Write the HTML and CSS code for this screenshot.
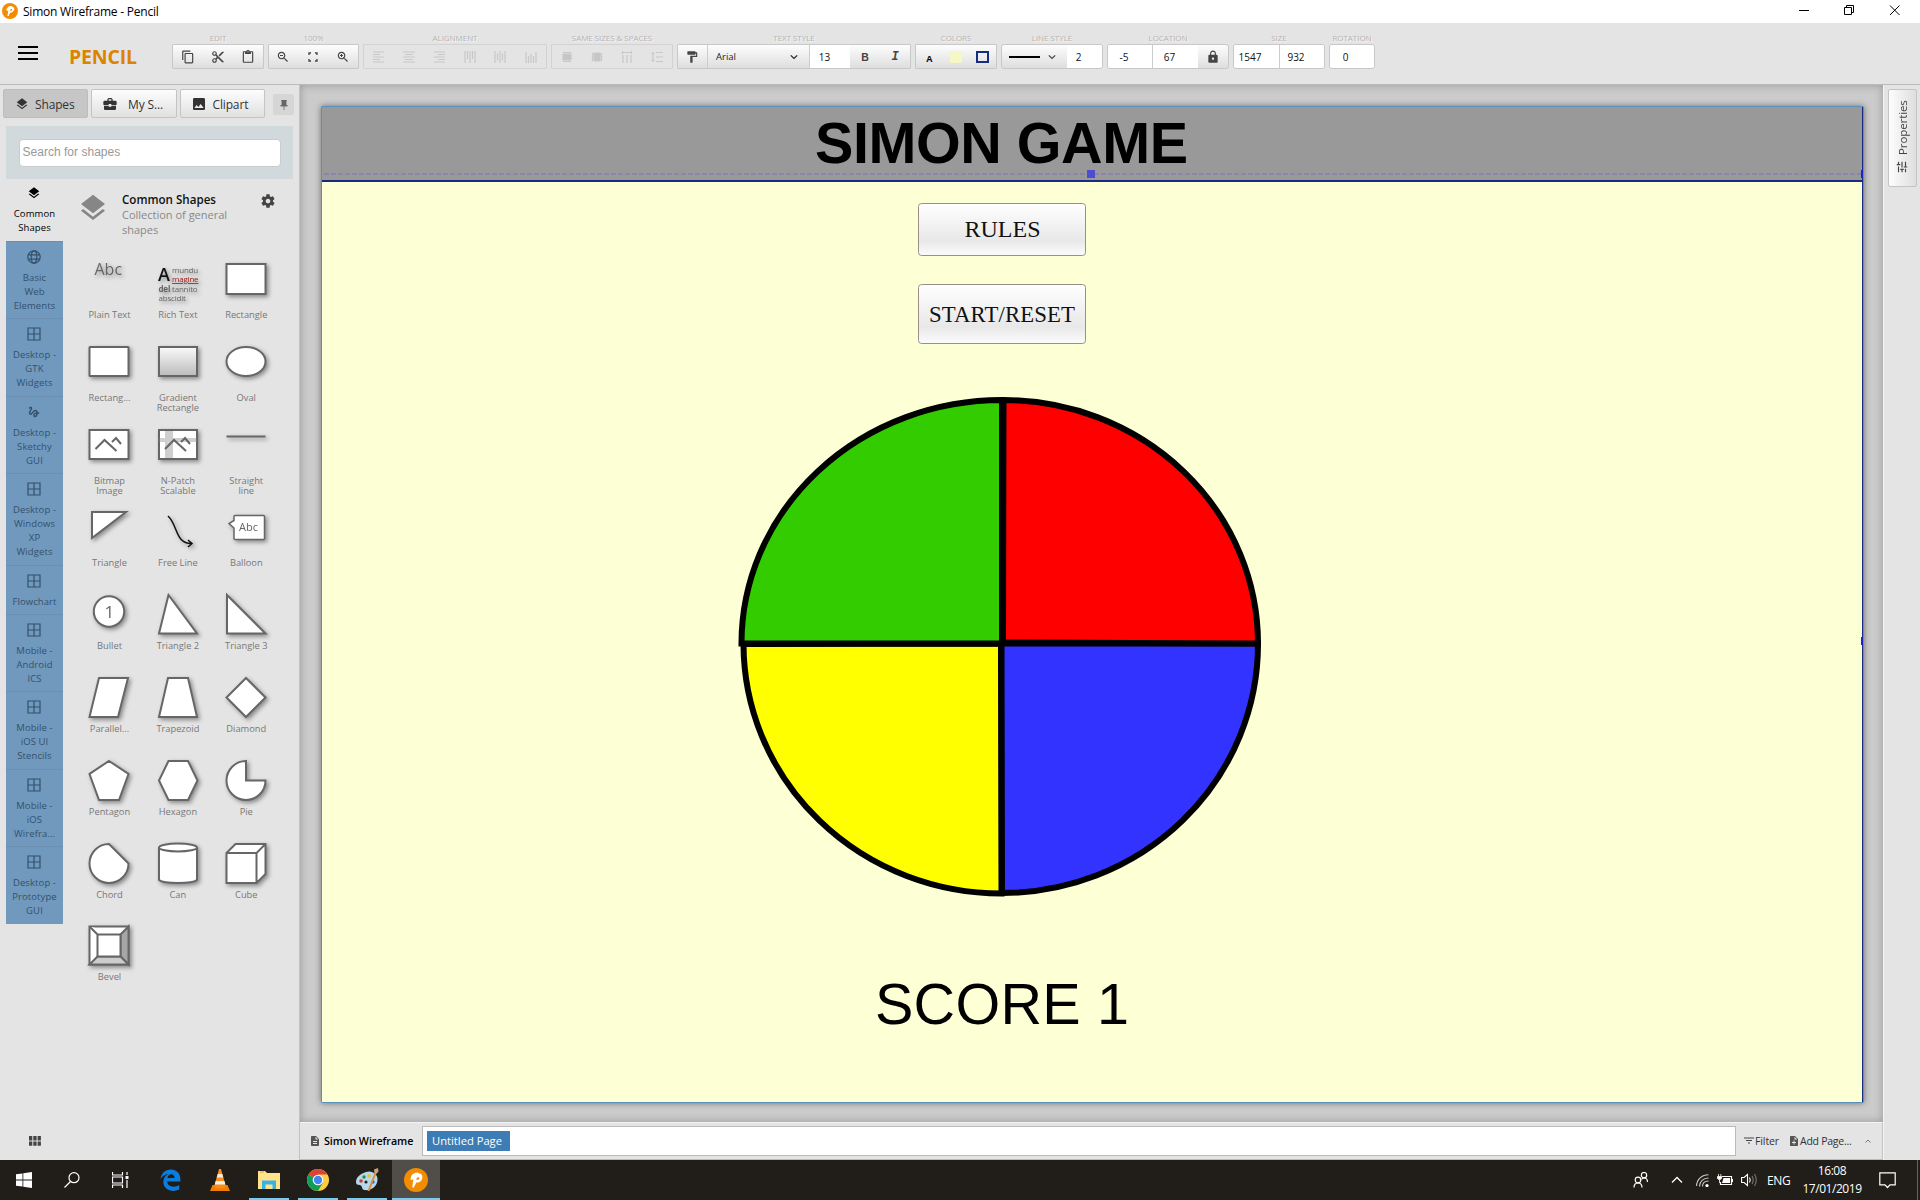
FILE: index.html
```html
<!DOCTYPE html>
<html lang="en">
<head>
<meta charset="utf-8">
<title>Simon Wireframe - Pencil</title>
<link rel="stylesheet" href="styles.css">
</head>
<body>
<svg class="defs" width="0" height="0">
  <defs>
    <symbol id="layers" viewBox="0 0 24 24"><path d="M11.99 18.54l-7.37-5.73L3 14.07l9 7 9-7-1.63-1.27-7.38 5.74zM12 16l7.36-5.73L21 9l-9-7-9 7 1.63 1.27L12 16z"/></symbol>
    <symbol id="copy" viewBox="0 0 24 24"><path d="M16 1H4c-1.1 0-2 .9-2 2v14h2V3h12V1zm3 4H8c-1.1 0-2 .9-2 2v14c0 1.1.9 2 2 2h11c1.1 0 2-.9 2-2V7c0-1.1-.9-2-2-2zm0 16H8V7h11v14z"/></symbol>
    <symbol id="cut" viewBox="0 0 24 24"><path d="M9.64 7.64c.23-.5.36-1.05.36-1.64 0-2.21-1.79-4-4-4S2 3.79 2 6s1.79 4 4 4c.59 0 1.14-.13 1.64-.36L10 12l-2.36 2.36C7.14 14.13 6.59 14 6 14c-2.21 0-4 1.79-4 4s1.79 4 4 4 4-1.79 4-4c0-.59-.13-1.14-.36-1.64L12 14l7 7h3v-1L9.64 7.64zM6 8c-1.1 0-2-.89-2-2s.9-2 2-2 2 .89 2 2-.9 2-2 2zm0 12c-1.1 0-2-.89-2-2s.9-2 2-2 2 .89 2 2-.9 2-2 2zm6-7.500c-.28 0-.5-.22-.5-.5s.22-.5.5-.5.5.22.5.5-.22.5-.5.5zM19 3l-6 6 2 2 7-7V3z"/></symbol>
    <symbol id="paste" viewBox="0 0 24 24"><path d="M19 2h-4.180C14.400.84 13.300 0 12 0c-1.300 0-2.400.84-2.820 2H5c-1.100 0-2 .9-2 2v16c0 1.100.9 2 2 2h14c1.100 0 2-.9 2-2V4c0-1.100-.9-2-2-2zm-7 0c.55 0 1 .45 1 1s-.45 1-1 1-1-.45-1-1 .45-1 1-1zm7 18H5V4h2v3h10V4h2v16z"/></symbol>
    <symbol id="lens" viewBox="0 0 24 24"><path d="M15.500 14h-.79l-.28-.27C15.410 12.590 16 11.110 16 9.500 16 5.910 13.090 3 9.500 3S3 5.910 3 9.500 5.910 16 9.500 16c1.610 0 3.090-.59 4.230-1.570l.27.28v.79l5 4.990L20.490 19l-4.990-5zm-6 0C7.010 14 5 11.990 5 9.500S7.010 5 9.500 5 14 7.010 14 9.500 11.990 14 9.500 14z"/></symbol>
    <symbol id="gear" viewBox="0 0 24 24"><path d="M19.430 12.980c.04-.32.07-.64.07-.98s-.03-.66-.07-.98l2.110-1.650c.19-.15.24-.42.12-.64l-2-3.460c-.12-.22-.39-.3-.61-.22l-2.490 1c-.52-.4-1.080-.73-1.690-.98l-.38-2.650C14.460 2.180 14.250 2 14 2h-4c-.25 0-.46.18-.49.42l-.38 2.650c-.61.25-1.170.59-1.690.98l-2.490-1c-.23-.09-.49 0-.61.22l-2 3.460c-.13.22-.07.49.12.64l2.110 1.650c-.04.32-.07.65-.07.98s.03.66.07.98l-2.110 1.650c-.19.15-.24.42-.12.64l2 3.460c.12.22.39.3.61.22l2.490-1c.52.4 1.080.73 1.690.98l.38 2.650c.03.24.24.42.49.42h4c.25 0 .46-.18.49-.42l.38-2.650c.61-.25 1.170-.59 1.690-.98l2.490 1c.23.09.49 0 .61-.22l2-3.460c.12-.22.07-.49-.12-.64l-2.110-1.650zM12 15.500c-1.930 0-3.500-1.570-3.500-3.500s1.570-3.500 3.500-3.500 3.500 1.570 3.500 3.500-1.570 3.500-3.500 3.500z"/></symbol>
    <symbol id="roller" viewBox="0 0 24 24"><path d="M18 4V3c0-.55-.45-1-1-1H5c-.55 0-1 .45-1 1v4c0 .55.45 1 1 1h12c.55 0 1-.45 1-1V6h1v4H9v11c0 .55.45 1 1 1h2c.55 0 1-.45 1-1v-9h8V4h-3z"/></symbol>
    <symbol id="lock" viewBox="0 0 24 24"><path d="M18 8h-1V6c0-2.760-2.240-5-5-5S7 3.240 7 6v2H6c-1.100 0-2 .9-2 2v10c0 1.100.9 2 2 2h12c1.100 0 2-.9 2-2V10c0-1.100-.9-2-2-2zm-6 9c-1.100 0-2-.9-2-2s.9-2 2-2 2 .9 2 2-.9 2-2 2zm3.100-9H8.900V6c0-1.710 1.390-3.100 3.100-3.100 1.710 0 3.100 1.390 3.100 3.100v2z"/></symbol>
    <symbol id="case" viewBox="0 0 24 24"><path d="M10 16v-1H3.010L3 19c0 1.110.89 2 2 2h14c1.110 0 2-.89 2-2v-4h-7v1h-4zm10-9h-4.010V5l-2-2h-4l-2 2v2H4c-1.100 0-2 .9-2 2v3c0 1.110.89 2 2 2h6v-2h4v2h6c1.100 0 2-.9 2-2V9c0-1.100-.9-2-2-2zm-6 0h-4V5h4v2z"/></symbol>
    <symbol id="image" viewBox="0 0 24 24"><path d="M21 19V5c0-1.100-.9-2-2-2H5c-1.100 0-2 .9-2 2v14c0 1.100.9 2 2 2h14c1.100 0 2-.9 2-2zM8.500 13.500l2.500 3.010L14.500 12l4.500 6H5l3.500-4.500z"/></symbol>
    <symbol id="gesture" viewBox="0 0 24 24"><path d="M4.590 6.890c.7-.71 1.400-1.350 1.710-1.220.5.2 0 1.030-.3 1.520-.25.42-2.860 3.890-2.860 6.310 0 1.280.48 2.340 1.340 2.980.75.56 1.740.73 2.640.46 1.070-.31 1.950-1.400 3.060-2.770 1.210-1.490 2.830-3.440 4.080-3.440 1.630 0 1.650 1.010 1.760 1.790-3.780.64-5.380 3.670-5.380 5.370 0 1.700 1.440 3.090 3.210 3.090 1.630 0 4.290-1.330 4.690-6.100H21v-2.500h-2.470c-.15-1.650-1.090-4.200-4.030-4.200-2.250 0-4.180 1.910-4.940 2.840-.58.73-2.060 2.480-2.290 2.720-.25.3-.68.84-1.110.84-.45 0-.72-.83-.36-1.920.35-1.090 1.400-2.860 1.850-3.520.78-1.140 1.300-1.920 1.300-3.280C8.950 3.690 7.310 3 6.440 3 5.120 3 3.970 4 3.720 4.250c-.36.36-.66.66-.88.93l1.750 1.710zm9.290 11.660c-.31 0-.74-.26-.74-.72 0-.6.73-2.200 2.870-2.760-.3 2.690-1.430 3.480-2.130 3.480z"/></symbol>
    <symbol id="doc" viewBox="0 0 24 24"><path d="M14 2H6c-1.100 0-1.990.9-1.990 2L4 20c0 1.100.89 2 1.990 2H18c1.100 0 2-.9 2-2V8l-6-6zm2 16H8v-2h8v2zm0-4H8v-2h8v2zm-3-5V3.500L18.500 9H13z"/></symbol>
    <symbol id="docadd" viewBox="0 0 24 24"><path d="M14 2H6c-1.100 0-1.990.9-1.990 2L4 20c0 1.100.89 2 1.990 2H18c1.100 0 2-.9 2-2V8l-6-6zm2 14h-3v3h-2v-3H8v-2h3v-3h2v3h3v2zm-3-7V3.500L18.500 9H13z"/></symbol>
    <symbol id="tune" viewBox="0 0 24 24"><path d="M3 17v2h6v-2H3zM3 5v2h10V5H3zm10 16v-2h8v-2h-8v-2h-2v6h2zM7 9v2H3v2h4v2h2V9H7zm14 4v-2H11v2h10zm-6-4h2V7h4V5h-4V3h-2v6z"/></symbol>
    <symbol id="grid4" viewBox="0 0 14 14"><path d="M1 1h12v12H1zM7 1v12M1 7h12" fill="none" stroke="currentColor" stroke-width="1.200"/></symbol>
    <symbol id="globe" viewBox="0 0 14 14"><g fill="none" stroke="currentColor" stroke-width="1.200"><circle cx="7" cy="7" r="6.200"/><ellipse cx="7" cy="7" rx="2.800" ry="6.200"/><path d="M1.300 4.800h11.400M1.300 9.200h11.400"/></g></symbol>
    <symbol id="down" viewBox="0 0 10 10"><path d="M1.800 3.300L5 6.500l3.200-3.200" fill="none" stroke="currentColor" stroke-width="1.200"/></symbol>
    <symbol id="pencil" viewBox="0 0 24 24"><circle cx="12" cy="12" r="12" fill="#f28c00"/><path d="M9 19.500l1.300-9.800C10.700 6.600 12.500 5.600 14.700 5.800c2.600.3 3.600 2.600 2.700 4.900-.8 2.100-3 3.300-5.600 3.100L9 19.500M10 10.500L7.300 11C7 7.500 10 5 14 5.200" fill="#fff" stroke="#fff" stroke-width="1.500"/><path d="M12.500 10.800c.2-1.700 2.700-2.300 2.900-.6.100 1.200-1.600 1.900-2.800 1.700z" fill="#f28c00"/></symbol>
    <linearGradient id="btn" x2="0" y2="1"><stop offset="0" stop-color="#fff"/><stop offset=".72" stop-color="#e8e8e8"/><stop offset="1" stop-color="#fcfcfc"/></linearGradient>
    <linearGradient id="grey" x2="0" y2="1"><stop offset="0" stop-color="#fafafa"/><stop offset="1" stop-color="#bbb"/></linearGradient>
  </defs>
</svg>

<header class="titlebar">
  <svg class="i16"><use href="#pencil"/></svg>
  <span class="title">Simon Wireframe - Pencil</span>
  <svg class="winbtns" width="100" height="11" viewBox="0 0 100 11"><g fill="none" stroke="#000" stroke-width="1"><path d="M0 5.500h10M47.500 2.500V.5h7v7h-2M45.500 2.500h7v7h-7zM91 .5l9.500 9.500M100.500.5L91 10"/></g></svg>
</header>

<nav class="toolbar">
  <svg class="burger" width="20" height="14"><path d="M0 1h20M0 7h20M0 13h20" stroke="#000" stroke-width="2"/></svg>
  <span class="brand">PENCIL</span>
  <div class="groups">
    <section><h6>EDIT</h6><div class="box"><i><svg class="i14"><use href="#copy"/></svg></i><i><svg class="i14"><use href="#cut"/></svg></i><i><svg class="i14"><use href="#paste"/></svg></i></div></section>
    <section><h6>100%</h6><div class="box zoom"><i><svg class="i14"><use href="#lens"/><path d="M4 5.500h3" stroke="#444"/></svg></i><i><svg width="10" height="10"><path d="M1 3V1h2M7 1h2v2M9 7v2H7M3 9H1V7" fill="none" stroke="#444" stroke-width="1.300"/></svg></i><i><svg class="i14"><use href="#lens"/><path d="M4 5.500h3M5.500 4v3" stroke="#444"/></svg></i></div></section>
    <section><h6>ALIGNMENT</h6><div class="box off">
      <i><svg width="12" height="12"><path d="M0 1h11M0 3.500h7M0 6h11M0 8.500h7M0 11h11"/></svg></i>
      <i><svg width="12" height="12"><path d="M0 1h12M2 3.500h8M0 6h12M2 8.500h8M0 11h12"/></svg></i>
      <i><svg width="12" height="12"><path d="M0 1h11M4 3.500h7M0 6h11M4 8.500h7M0 11h11"/></svg></i>
      <i><svg width="12" height="12"><path d="M1 0v12M3.500 0v8M6 0v12M8.500 0v8M11 0v12"/></svg></i>
      <i><svg width="12" height="12"><path d="M1 0v12M3.500 2.500v7M6 0v12M8.500 2.500v7M11 0v12"/></svg></i>
      <i><svg width="12" height="12"><path d="M1 1v11M3.500 5v7M6 3v9M8.500 5v7M11 1v11"/></svg></i></div></section>
    <section><h6>SAME SIZES &amp; SPACES</h6><div class="box off">
      <i><svg width="10" height="12"><path d="M1 1.500h8M1 10.500h8"/><path d="M1 3h8v6H1z" fill="#c6c6c6"/></svg></i>
      <i><svg width="12" height="10"><path d="M1.500 1v8M10.500 1v8"/><path d="M3 1h6v8H3z" fill="#c6c6c6"/></svg></i>
      <i><svg width="12" height="12"><path d="M1 1.500h10M2 4v8M6 4v8M10 4v8M1.500 0v3M10.500 0v3"/></svg></i>
      <i><svg width="12" height="12"><path d="M2 1v10M.5 2.500h3M.5 9.500h3M5 1.500h7M5 6h7M5 10.500h7"/></svg></i></div></section>
    <section><h6>TEXT STYLE</h6><div class="box"><i class="w30 sep"><svg class="i14 roller"><use href="#roller"/></svg></i><i class="font sep">Arial<svg width="10" height="10"><use href="#down"/></svg></i><i class="w40 val">13</i><i class="b">B</i><i class="it">I</i></div></section>
    <section><h6>COLORS</h6><div class="box"><i class="a">A</i><i><b class="sw1"></b></i><i><b class="sw2"></b></i></div></section>
    <section><h6>LINE STYLE</h6><div class="box round"><i class="line"><b></b><svg width="10" height="10"><use href="#down"/></svg></i><i class="val w35 l">2</i></div></section>
    <section><h6>LOCATION</h6><div class="box round"><i class="val sep w45 l">-5</i><i class="val w45 l">67</i><i><svg class="i14"><use href="#lock"/></svg></i></div></section>
    <section><h6>SIZE</h6><div class="box round"><i class="val sep tl">1547</i><i class="val l">932</i></div></section>
    <section><h6>ROTATION</h6><div class="box round"><i class="val rot">0</i></div></section>
  </div>
</nav>

<main>
  <aside class="left">
    <div class="tabs">
      <div class="tab on"><svg class="i14"><use href="#layers"/></svg>Shapes</div>
      <div class="tab"><svg class="i16"><use href="#case"/></svg>My S...</div>
      <div class="tab"><svg class="i16"><use href="#image"/></svg>Clipart</div>
      <div class="pin"><svg width="8" height="10"><path d="M1 .5h6M2 .5h4v4l1.500 1.500h-7L2 4.500zM4 6v4" fill="#666" stroke="#666" stroke-width=".8"/></svg></div>
    </div>
    <div class="search"><div class="input">Search for shapes</div></div>
    <div class="panel">
      <div class="cats">
        <div class="cat first"><svg class="i14"><use href="#layers"/></svg>Common<br>Shapes</div>
        <div class="cat"><svg class="i14"><use href="#globe"/></svg>Basic<br>Web<br>Elements</div>
        <div class="cat"><svg class="i14"><use href="#grid4"/></svg>Desktop -<br>GTK<br>Widgets</div>
        <div class="cat"><svg class="i14"><use href="#gesture"/></svg>Desktop -<br>Sketchy<br>GUI</div>
        <div class="cat"><svg class="i14"><use href="#grid4"/></svg>Desktop -<br>Windows<br>XP<br>Widgets</div>
        <div class="cat"><svg class="i14"><use href="#grid4"/></svg>Flowchart</div>
        <div class="cat"><svg class="i14"><use href="#grid4"/></svg>Mobile -<br>Android<br>ICS</div>
        <div class="cat"><svg class="i14"><use href="#grid4"/></svg>Mobile -<br>iOS UI<br>Stencils</div>
        <div class="cat"><svg class="i14"><use href="#grid4"/></svg>Mobile -<br>iOS<br>Wirefra...</div>
        <div class="cat"><svg class="i14"><use href="#grid4"/></svg>Desktop -<br>Prototype<br>GUI</div>
        <svg class="apps" width="12" height="10"><path d="M0 0h3.300v4.400H0zM4.300 0h3.300v4.400H4.300zM8.600 0h3.300v4.400H8.600zM0 5.400h3.300v4.400H0zM4.300 5.400h3.300v4.400H4.300zM8.600 5.400h3.300v4.400H8.600z" fill="#444"/></svg>
      </div>
      <div class="stock">
        <div class="head">
          <svg class="big"><use href="#layers"/></svg>
          <div class="desc"><strong>Common Shapes</strong><span>Collection of general shapes</span></div>
          <svg class="i16 gear"><use href="#gear"/></svg>
        </div>
        <div class="grid">
          <figure><svg><text x="9.500" y="20" class="t-abc">Abc</text></svg><figcaption>Plain Text</figcaption></figure>
          <figure><svg><text x="4" y="26" class="t-a">A</text><text x="18" y="18" class="t-s">mundu</text><text x="18" y="27" class="t-s red">magine</text><text x="4.500" y="37" class="t-s"><tspan font-weight="bold">del</tspan> tannito</text><text x="4.500" y="46" class="t-s">abscidit</text></svg><figcaption>Rich Text</figcaption></figure>
          <figure><svg><path d="M4.500 9h39v30h-39z"/></svg><figcaption>Rectangle</figcaption></figure>
          <figure><svg><rect x="4.500" y="9" width="39" height="29" rx=".5"/></svg><figcaption>Rectang...</figcaption></figure>
          <figure><svg><path d="M5 9h38v29H5z" fill="url(#grey)"/></svg><figcaption>Gradient Rectangle</figcaption></figure>
          <figure><svg><ellipse cx="24" cy="23.500" rx="19.500" ry="14.500"/></svg><figcaption>Oval</figcaption></figure>
          <figure><svg><path d="M4.500 9h39v29h-39z"/><path class="n" d="M10.500 28l9-9 12 11M27 21l4-4 5 6"/></svg><figcaption>Bitmap Image</figcaption></figure>
          <figure><svg><path d="M5 9h38v29H5z"/><path d="M11 10h8v27h-8zM5 17h38v4H5z" fill="#888" fill-opacity=".4" stroke="none"/><path class="n" d="M11 28l9-9 12 11M27 21l4-4 5 6"/></svg><figcaption>N-Patch Scalable</figcaption></figure>
          <figure><svg><path class="n" d="M4.500 15.500h39"/></svg><figcaption>Straight line</figcaption></figure>
          <figure><svg><path d="M7 9h34L7 35z"/></svg><figcaption>Triangle</figcaption></figure>
          <figure><svg><path class="k" d="M14 13c10 9 7 28 24 27.500M34 37l4 3.500-4 3.500"/></svg><figcaption>Free Line</figcaption></figure>
          <figure><svg><path d="M13 12.500h28.500a1 1 0 0 1 1 1v22a1 1 0 0 1-1 1H13a1 1 0 0 1-1-1V25l-5-4.500 5-3v-4a1 1 0 0 1 1-1z" stroke-width="1.500"/><text x="17" y="28" class="t-b">Abc</text></svg><figcaption>Balloon</figcaption></figure>
          <figure><svg><circle cx="24" cy="25.500" r="15.200"/><text x="19.500" y="31.500" class="t-1">1</text></svg><figcaption>Bullet</figcaption></figure>
          <figure><svg><path d="M14.500 9L43 47.500H5z"/></svg><figcaption>Triangle 2</figcaption></figure>
          <figure><svg><path d="M5 9l38.500 38.500H5z"/></svg><figcaption>Triangle 3</figcaption></figure>
          <figure><svg><path d="M14 9h29l-10 39H4.500z"/></svg><figcaption>Parallel...</figcaption></figure>
          <figure><svg><path d="M14 9h20l9 39H5z"/></svg><figcaption>Trapezoid</figcaption></figure>
          <figure><svg><path d="M24 9l19.500 19.500L24 48 4.500 28.500z"/></svg><figcaption>Diamond</figcaption></figure>
          <figure><svg><path d="M24 9l19.500 13-9.500 26H14L4.500 22z"/></svg><figcaption>Pentagon</figcaption></figure>
          <figure><svg><path d="M14.500 9H34l9.500 19.500L34 48H14.500L5 28.500z"/></svg><figcaption>Hexagon</figcaption></figure>
          <figure><svg><path d="M24 28.500h19.500A19.500 19.500 0 1 1 24 9z"/></svg><figcaption>Pie</figcaption></figure>
          <figure><svg><path d="M24 9l19.500 19.500A19.500 19.500 0 1 1 24 9z"/></svg><figcaption>Chord</figcaption></figure>
          <figure><svg><path d="M5 12.500v32.500c5 4 33 4 38 0V12.500"/><ellipse cx="24" cy="12.500" rx="19" ry="4"/></svg><figcaption>Can</figcaption></figure>
          <figure><svg><path d="M4.500 18l9-9h30v30l-9 9h-30zM4.500 18h30v30M34.500 18l9-9"/></svg><figcaption>Cube</figcaption></figure>
          <figure><svg><path d="M4.500 9.500h39v38h-39z"/><path d="M43.500 9.500v38l-8-8v-22z" fill="#a6a6a6"/><path d="M4.500 47.500h39l-8-8h-23z" fill="#ccc"/><path d="M4.500 9.500l8 8h23M12.500 17.500v22h23v-22z"/></svg><figcaption>Bevel</figcaption></figure>
        </div>
      </div>
    </div>
  </aside>

  <div class="center">
    <div class="canvas">
      <svg class="page" width="1543" height="997" viewBox="321 106 1543 997">
        <path fill="#fdffd5" d="M321 106h1543v997H321z"/>
        <path fill="#999" d="M322 107h1540v74H322z"/>
        <path d="M324 174h1538" stroke="#8a85ab" stroke-width="2" stroke-dasharray="5 2"/>
        <path fill="#172b80" d="M322 180h1541v2H322zM1862 107h1v995h-1z"/>
        <path fill="#4d4dcf" d="M1087 170h8v8h-8z"/>
        <path fill="#1f1fdc" d="M1861 170h2v8h-2zM1861 637h2v8h-2z"/>
        <text class="heading" x="815" y="163" textLength="373">SIMON GAME</text>
        <g fill="url(#btn)" stroke="#9a8f86"><rect x="918.500" y="203.500" width="167" height="52" rx="3"/><rect x="918.500" y="284.500" width="167" height="59" rx="3"/></g>
        <text class="rules" x="1002.500" y="237">RULES</text>
        <text class="start" x="1002" y="322" textLength="146">START/RESET</text>
        <g stroke="#000" stroke-width="6">
          <path fill="#ff0" d="M1001.500 893.500A258 250 0 0 1 743.500 644L1001 643.500z"/>
          <path fill="#33f" d="M1258 643.500A256 249 0 0 1 1002 893L1001.500 643.500z"/>
          <path fill="#3c0" d="M741.500 643.500A260.500 243.500 0 0 1 1002 400V643.500z"/>
          <path fill="red" d="M1003.500 400A254.500 243.500 0 0 1 1258 643.500L1003 642.500z"/>
        </g>
        <text class="score" x="875" y="1024" textLength="254">SCORE 1</text>
        <path fill="none" stroke="#5b8fbe" d="M321.500 106.500h1542v996h-1542z"/>
      </svg>
    </div>
    <footer class="pagebar">
      <svg class="i12"><use href="#doc"/></svg><strong>Simon Wireframe</strong>
      <div class="crumbs"><span>Untitled Page</span></div>
      <svg class="filt" width="10" height="8"><path d="M0 1h10M2 3.500h6M4 6h2" stroke="#444"/></svg><span class="flabel">Filter</span>
      <svg class="i12 add"><use href="#docadd"/></svg><span class="alabel">Add Page...</span>
      <svg class="up" width="8" height="8"><path d="M1.500 5.500L4 3l2.500 2.500" fill="none" stroke="#777"/></svg>
    </footer>
  </div>

  <aside class="right"><div class="props"><span>Properties</span><svg class="i14"><use href="#tune"/></svg></div></aside>
</main>

<footer class="taskbar">
  <div class="app"><svg width="16" height="16"><path d="M0 2.300l6.500-.9v6.200H0zM7.300 1.300L16 0v7.600H7.300zM0 8.400h6.500v6.200L0 13.700zM7.300 8.400H16V16l-8.700-1.300z" fill="#fff"/></svg></div>
  <div class="app"><svg width="16" height="16"><g fill="none" stroke="#fff" stroke-width="1.200"><circle cx="10" cy="5.700" r="5"/><path d="M6.500 9.500L.5 15.500"/></g></svg></div>
  <div class="app"><svg width="17" height="16"><path d="M.5 0v3h10V0M.5 5h10v6h-10zM.5 16v-3h10v3M15 0v3M15 8v8" fill="none" stroke="#fff" stroke-width="1.200"/><path d="M13.500 4h3v3h-3z" fill="#fff"/></svg></div>
  <div class="app"><svg width="21" height="22" viewBox="0 0 21 22"><path d="M.4 9.700C1.500 4.200 5.200.4 10.800.4c6 0 9.600 4.300 9.600 9.600v2.600H7.200c.2 5.600 7.800 6.300 12 3.500v4.400C11.700 24.200 3.400 20.300 3.300 13c0-4.100 2.200-6.800 5.100-8.100C5 5.400 2.400 7 .4 9.700zM7.400 9h7.100c.1-5-6.300-4.800-7.100 0z" fill="#0b7bdc"/></svg></div>
  <div class="app"><svg width="20" height="22" viewBox="0 0 20 22"><path d="M2.500 16h15L20 22H0z" fill="#f07d00"/><path d="M9 0h2l5 18q-6 3-12 0z" fill="#ff8a14"/><path d="M7.800 5h4.500l1 3.600H6.700zM5.700 12h8.700l1 3.500H4.700z" fill="#eee"/></svg></div>
  <div class="app run"><svg width="22" height="20" viewBox="0 0 22 20"><path d="M0 1h7l2 2h13v16H0z" fill="#ffe28a"/><path d="M2 2h4" stroke="#d9a520"/><path d="M4 19v-8.500h14V19h-3.500v-4.500h-7V19z" fill="#38b1e6"/></svg></div>
  <div class="app run"><svg width="22" height="22" viewBox="0 0 22 22"><circle cx="11" cy="11" r="11" fill="#ffcd40"/><path d="M11 11L1.500 5.500A11 11 0 0 1 20.500 5.500H11z" fill="#db4437"/><path d="M1.500 5.500A11 11 0 0 0 11 22l4.800-8.300L11 11z" fill="#0f9d58"/><circle cx="11" cy="11" r="5.300" fill="#fff"/><circle cx="11" cy="11" r="4.200" fill="#4285f4"/></svg></div>
  <div class="app run"><svg width="24" height="24" viewBox="0 0 24 24"><path d="M11 4c6-2 12 2 11.500 8-.5 7-7 11-13 10-3-.6-2-3.500-3.500-4.500S1 17.500 1 14C1 9 6 5.500 11 4z" fill="#b5d9ec"/><circle cx="6" cy="13" r="1.800" fill="#d33"/><circle cx="9" cy="9" r="1.700" fill="#2a8b3c"/><circle cx="14" cy="8" r="1.800" fill="#f2c21b"/><circle cx="11" cy="14" r="1.600" fill="#26231e"/><circle cx="18" cy="14" r="1.700" fill="#3a66c9"/><path d="M21 4l-7.500 19" stroke="#e08b3b" stroke-width="2"/><path d="M19 1.500l4-1.500.5 3.500-2.500 2.500-1.500-1z" fill="#c9a37a"/></svg></div>
  <div class="app run active"><svg width="24" height="24"><use href="#pencil"/></svg></div>
  <div class="tray">
    <svg width="16" height="16" class="people"><g fill="none" stroke="#fff" stroke-width="1.200"><circle cx="5" cy="8" r="2.800"/><path d="M1 15.500c0-6 8-6 8 0M8.500 7.500C9 6.500 10 6 11 6c2 0 3.500 1.500 3.500 4"/><circle cx="11" cy="3.200" r="2.700"/></g></svg>
    <svg width="12" height="8" class="chev"><path d="M1 6.500l5-5 5 5" fill="none" stroke="#fff" stroke-width="1.300"/></svg>
    <svg width="13" height="13" class="wifi"><g fill="none" stroke="#ccc" stroke-width="1.100"><path d="M.6 12C.6 5.500 6 .8 12.500.8M3.500 12.500c0-5 4-8.500 9-8.500M6.500 12.500c0-3.500 2.500-5.500 6-5.500"/></g><circle cx="11" cy="11.500" r="1.600" fill="#fff"/></svg>
    <svg width="16" height="12" class="bat"><path d="M5 2.500h9.500v8H3.500V8M15.500 5v3" fill="none" stroke="#fff" stroke-width="1.200"/><path d="M6.500 4h6.500v5h-8z" fill="#fff"/><path d="M.5 2.500h4v2l-2 1.500-2-1.500zM1.500 0v2M3.800 0v2M2.500 6v3" stroke="#fff" fill="#fff" stroke-width=".8"/></svg>
    <svg width="16" height="14" class="vol"><g fill="none" stroke="#fff" stroke-width="1.100"><path d="M.6 4.500h2.500l3.400-3v11l-3.400-3H.6zM8.500 4.500q1.500 2.500 0 5"/><path d="M11 3q2.500 4 0 8M13.500 1q3.500 6 0 12" stroke="#777"/></g></svg>
    <span class="lang">ENG</span>
    <div class="clock">16:08<br>17/01/2019</div>
    <svg width="17" height="17" class="act"><path d="M.8.800h15.400v12H11L8.500 15.500 6 12.800H.8z" fill="none" stroke="#fff" stroke-width="1.200"/></svg>
    <b class="peek"></b>
  </div>
</footer>
</body>
</html>
```
FILE: styles.css
```css
* { box-sizing: border-box; }
body { margin: 0; width: 1920px; height: 1200px; overflow: hidden; display: flex; flex-direction: column; background: #e4e4e4; color: #222; font-family: "Open Sans", "Noto Sans", sans-serif; }
.defs { position: absolute; }
svg { fill: currentColor; flex: none; display: block; }
i { font-style: normal; }
.i12 { width: 12px; height: 12px; }
.i14 { width: 14px; height: 14px; }
.i16 { width: 16px; height: 16px; }

.titlebar { height: 23px; background: #fff; display: flex; align-items: center; padding: 0 21px 2px 2px; font-size: 12px; color: #000; flex: none; }
.title { margin: 2px 0 0 5px; letter-spacing: -.22px; }
.winbtns { margin-left: auto; overflow: visible; }

.toolbar { height: 62px; flex: none; display: flex; border-bottom: 1px solid #bbb; padding-left: 18px; }
.burger { margin-top: 23px; }
.brand { margin: 20px 0 0 31px; width: 103px; font-size: 19.500px; font-weight: 700; line-height: 28px; color: #db8400; letter-spacing: -.2px; }
.groups { display: grid; grid-template-columns: 92px 91px 184px 122px 234px 82px 102px 122px 92px 46px; column-gap: 4px; padding-top: 9px; }
h6 { margin: 0; font-size: 8px; font-weight: 400; line-height: 12px; color: #b4b4b4; text-align: center; white-space: nowrap; letter-spacing: -.05px; text-shadow: 1px 1px 0 #f4f4f4; }
.box { height: 25px; display: flex; border: 1px solid #c8c8c8; border-radius: 1px; background: linear-gradient(#fdfdfd, #dedede); color: #444; font: 9.500px "Open Sans", sans-serif; }
.box > i { flex: 1; display: flex; align-items: center; justify-content: center; min-width: 0; }
.round { border-radius: 3px; overflow: hidden; }
.off { background: none; border-color: #d2d2d2; }
.off svg { stroke: #c8c8c8; stroke-width: 1.200; }
.box .sep { border-right: 1px solid #ccc; }
.box .w30 { flex: 0 0 30px; }
.roller { margin-right: 2px; }
.zoom svg { margin-right: 1px; }
.box .w35 { flex: 0 0 35px; }
.box .w40 { flex: 0 0 40px; padding-right: 11px; }
.box .w45 { flex: 0 0 45px; }
.box .font { flex: 0 0 102px; justify-content: space-between; padding: 0 10px 0 8px; color: #222; }
.val { background: #fff; color: #111; font-size: 10px; }
.box .l { padding-right: 12px; }
.box .rot { padding-right: 13px; }
.box .tl { padding-right: 13px; }
.b { font: bold 10.500px "Liberation Sans"; }
.it { font: italic bold 12px "Liberation Mono"; }
.a { font: bold 9px "Open Sans"; color: #111; padding-top: 3px; }
.sw1 { width: 12px; height: 12px; background: #f5f7c4; }
.sw2 { width: 13px; height: 12px; border: 2px solid #172b80; }
.box .line { gap: 7px; padding-right: 3px; }
.line b { width: 31px; height: 2px; background: #000; }

main { flex: 1; display: flex; min-height: 0; }
.left { width: 300px; flex: none; border-right: 1px solid #c2c2c2; display: flex; flex-direction: column; }
.tabs { display: flex; padding: 4px 5px 0 3px; gap: 3px; height: 41px; }
.tab { width: 85.500px; height: 29px; border: 1px solid #c4c4c4; border-radius: 2px; background: linear-gradient(#fdfdfd, #e0e0e0); display: flex; align-items: center; gap: 6px; padding: 1px 0 0 10px; font-size: 12px; color: #333; letter-spacing: -.15px; }
.tab.on { background: #c6c6c6; border-color: #bdbdbd; width: 85px; }
.tab.on svg { margin-left: 1px; }
.tab:nth-child(2) { gap: 10px; }
.pin { width: 21px; height: 21px; margin: 5px 0 0 5px; background: #d6d6d6; border-radius: 2px; display: flex; align-items: center; justify-content: center; }
.search { margin: 0 6px; height: 53px; background: #d1d9dd; padding: 13px 12.500px; }
.input { height: 28px; width: 262px; border: 1px solid #c8ccce; border-radius: 4px; background: #fff; font: 12px/25px "Liberation Sans"; color: #999; padding-left: 3px; letter-spacing: .02px; }
.panel { flex: 1; display: flex; padding-left: 6px; min-height: 0; }
.cats { width: 57px; display: flex; flex-direction: column; font-size: 9.500px; line-height: 14px; text-align: center; color: #33516b; letter-spacing: .1px; }
.cat { background: #7199be; border-top: 1px solid #6b8fb0; padding: 8px 0 5.400px; display: flex; flex-direction: column; align-items: center; flex: none; }
.cat svg { margin: 0 1px 7px 0; }
.cat.first { background: none; border: 0; color: #000; height: 62px; padding-top: 7px; }
.apps { margin: auto 0 14px 23px; }
.stock { flex: 1; }
.head { display: flex; padding: 14px 17px 0 14px; height: 74px; }
.big { width: 32px; height: 32px; color: #868686; margin-top: -1px; }
.desc { margin-left: 13px; width: 125px; font-size: 11px; line-height: 15px; color: #888; }
.desc strong { display: block; font-size: 11.600px; font-weight: 600; color: #111; white-space: nowrap; line-height: 14px; }
.gear { margin-left: auto; margin-right: 6px; color: #444; }
.grid { display: grid; grid-template-columns: repeat(3, 68.400px); grid-auto-rows: 82.800px; padding-left: 12.300px; margin-top: 2px; }
figure { margin: 0; display: flex; flex-direction: column; align-items: center; }
figure svg { width: 48px; height: 54px; overflow: visible; fill: #fff; stroke: #666; stroke-width: 2; filter: drop-shadow(2px 2px 2px rgba(0,0,0,.4)); }
figure svg text { stroke: none; fill: #666; }
figure .n { fill: none; }
figure .k { fill: none; stroke: #111; stroke-width: 1.500; }
figcaption { font-size: 9.300px; line-height: 10px; width: 50px; text-align: center; color: #777; margin-top: 1px; }
.t-abc { font-size: 16px; }
figure .t-a { font: 600 18px "Open Sans"; fill: #111; }
.t-s { font-size: 8px; letter-spacing: -.2px; }
figure .red { fill: #a01818; text-decoration: underline; }
.t-b { font-size: 11px; }
.t-1 { font-size: 17px; }

.center { width: 1583px; flex: none; display: flex; flex-direction: column; }
.canvas { flex: 1; background: #cbcbcb; padding: 21px 0 0 21px; box-shadow: inset 0 0 8px rgba(0,0,0,.25); }
.page { box-shadow: 0 0 6px rgba(0,0,0,.45); }
.heading, .score { font: 57.500px "Liberation Sans"; fill: #000; }
.heading { font-weight: bold; }
.rules, .start { font: 24px "Liberation Serif"; text-anchor: middle; fill: #111; }
.start { font-size: 22.800px; }
.pagebar { height: 38px; flex: none; border-top: 1px solid #f4f4f4; border-bottom: 1px solid #bbb; border-right: 1px solid #c4c4c4; display: flex; align-items: center; padding-left: 9px; font-size: 10.500px; color: #333; }
.pagebar .i12 { color: #555; }
.pagebar strong { font-weight: 600; color: #000; margin-left: 3px; width: 98px; white-space: nowrap; font-size: 10.700px; letter-spacing: -.05px; }
.crumbs { width: 1314px; height: 30px; border: 1px solid #bbb; background: #fff; padding: 4px; }
.crumbs span { display: inline-block; background: #3d7cb5; color: #fff; height: 20px; line-height: 20px; width: 83px; padding-left: 5px; white-space: nowrap; font-size: 11.200px; }
.filt { margin-left: 8px; }
.flabel { width: 33px; margin-left: 1px; letter-spacing: -.1px; }
.alabel { width: 64px; white-space: nowrap; letter-spacing: -.25px; }

.right { flex: 1; border-left: 1px solid #f4f4f4; padding: 4px 0 0 4px; }
.props { width: 29px; height: 98px; border: 1px solid #c4c4c4; border-radius: 2px; background: linear-gradient(90deg, #fdfdfd, #dedede); display: flex; flex-direction: column; align-items: center; padding-top: 9px; font-size: 11.500px; color: #444; }
.props span { writing-mode: vertical-rl; transform: rotate(180deg); height: 56px; line-height: 16px; white-space: nowrap; letter-spacing: -.1px; }
.props svg { transform: rotate(-90deg); margin: 5px 2px 0 0; }

.taskbar { height: 40px; flex: none; background: #211d18; display: flex; color: #fff; }
.app { width: 49px; height: 40px; display: flex; align-items: center; justify-content: center; }
.app:nth-child(-n+3) { width: 48px; }
.app:nth-child(4) { width: 52px; }
.app:nth-child(5) { width: 48px; }
.run { background: linear-gradient(#76cdf0, #76cdf0) center bottom / 40px 2px no-repeat; }
.app.active { width: 48px; margin-left: 1px; background: linear-gradient(#76cdf0, #76cdf0) center bottom / 48px 2px no-repeat #514e4a; }
.tray { margin-left: auto; display: flex; align-items: center; width: 287px; font-size: 12px; }
.chev { margin-left: 22px; }
.wifi { margin-left: 13px; }
.bat { margin-left: 8px; }
.vol { margin-left: 8px; }
.lang { margin-left: 10px; width: 24px; letter-spacing: -.4px; }
.clock { width: 62px; margin-left: 10px; text-align: center; line-height: 18px; letter-spacing: -.45px; white-space: nowrap; }
.act { margin-left: 16px; }
.peek { width: 1px; height: 40px; background: #666; margin-left: 21px; }
```
